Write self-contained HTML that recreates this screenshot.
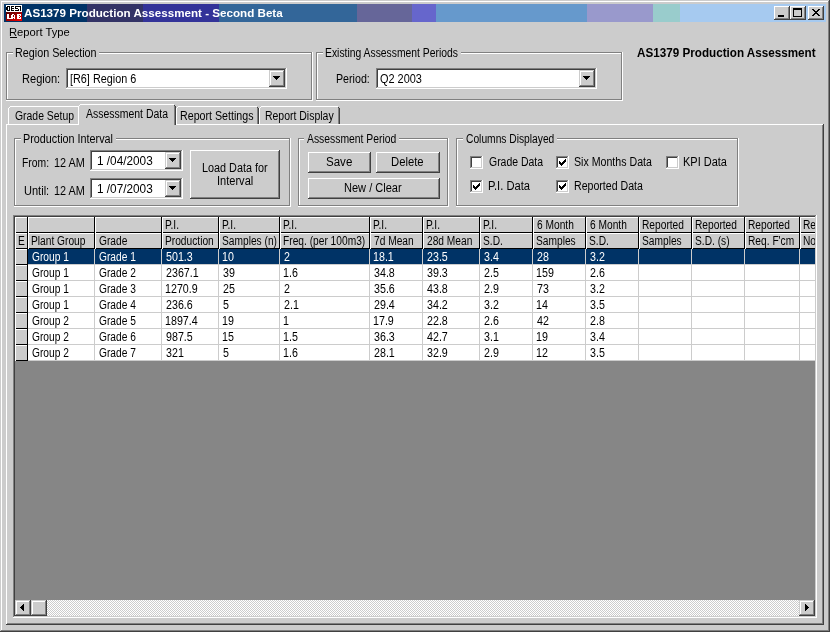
<!DOCTYPE html>
<html><head><meta charset="utf-8"><style>
html,body{margin:0;padding:0;width:830px;height:632px;overflow:hidden;background:#cccccc}
div{position:absolute;box-sizing:border-box}
.t{white-space:pre;transform-origin:0 0}
#tx{left:0;top:0;width:830px;height:632px;will-change:transform}
</style></head><body>
<div style="left:0px;top:0px;width:830px;height:632px;background:#cccccc;"></div><div style="left:0px;top:0px;width:829px;height:1px;background:#cccccc;"></div><div style="left:0px;top:0px;width:1px;height:631px;background:#cccccc;"></div><div style="left:1px;top:1px;width:827px;height:1px;background:#ffffff;"></div><div style="left:1px;top:1px;width:1px;height:629px;background:#ffffff;"></div><div style="left:0px;top:631px;width:830px;height:1px;background:#404040;"></div><div style="left:829px;top:0px;width:1px;height:632px;background:#404040;"></div><div style="left:1px;top:630px;width:828px;height:1px;background:#808080;"></div><div style="left:828px;top:1px;width:1px;height:630px;background:#808080;"></div><div style="left:4px;top:4px;width:83px;height:18px;background:#003366;"></div><div style="left:87px;top:4px;width:56px;height:18px;background:#333366;"></div><div style="left:143px;top:4px;width:76px;height:18px;background:#333399;"></div><div style="left:219px;top:4px;width:138px;height:18px;background:#336699;"></div><div style="left:357px;top:4px;width:55px;height:18px;background:#666699;"></div><div style="left:412px;top:4px;width:24px;height:18px;background:#6666cc;"></div><div style="left:436px;top:4px;width:151px;height:18px;background:#6699cc;"></div><div style="left:587px;top:4px;width:66px;height:18px;background:#9999cc;"></div><div style="left:653px;top:4px;width:27px;height:18px;background:#99cccc;"></div><div style="left:680px;top:4px;width:146px;height:18px;background:#a6caf0;"></div><svg style="position:absolute;left:6px;top:5px" width="16" height="16" viewBox="0 0 16 16" shape-rendering="crispEdges"><defs><linearGradient id="rg" x1="0" y1="0" x2="1" y2="1"><stop offset="0" stop-color="#500000"/><stop offset="0.5" stop-color="#a00000"/><stop offset="1" stop-color="#ff0000"/></linearGradient></defs><rect x="0" y="0" width="16" height="7" fill="#fff"/><rect x="0" y="7" width="16" height="9" fill="url(#rg)"/><path fill="#000" d="M1 1h3v1h-3zM5 1h3v1h-3zM9 1h6v1h-6zM0 2h2v1h-2zM3 2h1v1h-1zM5 2h1v1h-1zM9 2h1v1h-1zM14 2h1v1h-1zM0 3h2v1h-2zM3 3h1v1h-1zM5 3h3v1h-3zM9 3h3v1h-3zM14 3h1v1h-1zM0 4h2v1h-2zM3 4h1v1h-1zM5 4h1v1h-1zM12 4h1v1h-1zM14 4h1v1h-1zM1 5h3v1h-3zM5 5h3v1h-3zM9 5h4v1h-4zM14 5h1v1h-1z"/><path fill="#fff" d="M1 9h2v1h-2zM6 9h2v1h-2zM11 9h4v1h-4zM1 10h2v1h-2zM5 10h2v1h-2zM8 10h1v1h-1zM11 10h2v1h-2zM14 10h1v1h-1zM1 11h2v1h-2zM5 11h2v1h-2zM8 11h1v1h-1zM11 11h3v1h-3zM1 12h2v1h-2zM5 12h4v1h-4zM11 12h2v1h-2zM14 12h1v1h-1zM1 13h6v1h-6zM8 13h1v1h-1zM11 13h4v1h-4z"/></svg><div style="left:774px;top:6px;width:16px;height:14px;background:#cccccc;"></div><div style="left:774px;top:6px;width:15px;height:1px;background:#ffffff;"></div><div style="left:774px;top:6px;width:1px;height:13px;background:#ffffff;"></div><div style="left:774px;top:19px;width:16px;height:1px;background:#404040;"></div><div style="left:789px;top:6px;width:1px;height:14px;background:#404040;"></div><div style="left:775px;top:18px;width:14px;height:1px;background:#808080;"></div><div style="left:788px;top:7px;width:1px;height:12px;background:#808080;"></div><div style="left:790px;top:6px;width:16px;height:14px;background:#cccccc;"></div><div style="left:790px;top:6px;width:15px;height:1px;background:#ffffff;"></div><div style="left:790px;top:6px;width:1px;height:13px;background:#ffffff;"></div><div style="left:790px;top:19px;width:16px;height:1px;background:#404040;"></div><div style="left:805px;top:6px;width:1px;height:14px;background:#404040;"></div><div style="left:791px;top:18px;width:14px;height:1px;background:#808080;"></div><div style="left:804px;top:7px;width:1px;height:12px;background:#808080;"></div><div style="left:808px;top:6px;width:16px;height:14px;background:#cccccc;"></div><div style="left:808px;top:6px;width:15px;height:1px;background:#ffffff;"></div><div style="left:808px;top:6px;width:1px;height:13px;background:#ffffff;"></div><div style="left:808px;top:19px;width:16px;height:1px;background:#404040;"></div><div style="left:823px;top:6px;width:1px;height:14px;background:#404040;"></div><div style="left:809px;top:18px;width:14px;height:1px;background:#808080;"></div><div style="left:822px;top:7px;width:1px;height:12px;background:#808080;"></div><div style="left:778px;top:15px;width:6px;height:2px;background:#000000;"></div><div style="left:793px;top:8px;width:9px;height:9px;background:#000000;"></div><div style="left:794px;top:10px;width:7px;height:6px;background:#cccccc;"></div><svg style="position:absolute;left:812px;top:9px" width="8" height="7" viewBox="0 0 8 7" shape-rendering="crispEdges"><path fill="#000" d="M0 0h2v1h-2zM6 0h2v1h-2zM1 1h2v1h-2zM5 1h2v1h-2zM2 2h4v1h-4zM3 3h2v1h-2zM2 4h4v1h-4zM1 5h2v1h-2zM5 5h2v1h-2zM0 6h2v1h-2zM6 6h2v1h-2z"/></svg><div style="left:10px;top:37px;width:7px;height:1px;background:#000000;"></div><div style="left:7px;top:53px;width:304px;height:1px;background:#ffffff;"></div><div style="left:7px;top:53px;width:1px;height:46px;background:#ffffff;"></div><div style="left:6px;top:100px;width:307px;height:1px;background:#ffffff;"></div><div style="left:312px;top:52px;width:1px;height:49px;background:#ffffff;"></div><div style="left:6px;top:52px;width:306px;height:1px;background:#808080;"></div><div style="left:6px;top:52px;width:1px;height:48px;background:#808080;"></div><div style="left:7px;top:99px;width:305px;height:1px;background:#808080;"></div><div style="left:311px;top:53px;width:1px;height:47px;background:#808080;"></div><div style="left:13px;top:48px;width:86px;height:9px;background:#cccccc;"></div><div style="left:66px;top:68px;width:221px;height:21px;background:#ffffff;"></div><div style="left:66px;top:68px;width:220px;height:1px;background:#808080;"></div><div style="left:66px;top:68px;width:1px;height:20px;background:#808080;"></div><div style="left:67px;top:69px;width:218px;height:1px;background:#404040;"></div><div style="left:67px;top:69px;width:1px;height:18px;background:#404040;"></div><div style="left:66px;top:88px;width:221px;height:1px;background:#ffffff;"></div><div style="left:286px;top:68px;width:1px;height:21px;background:#ffffff;"></div><div style="left:67px;top:87px;width:219px;height:1px;background:#cccccc;"></div><div style="left:285px;top:69px;width:1px;height:19px;background:#cccccc;"></div><div style="left:269px;top:70px;width:16px;height:17px;background:#cccccc;"></div><div style="left:269px;top:70px;width:15px;height:1px;background:#cccccc;"></div><div style="left:269px;top:70px;width:1px;height:16px;background:#cccccc;"></div><div style="left:270px;top:71px;width:13px;height:1px;background:#ffffff;"></div><div style="left:270px;top:71px;width:1px;height:14px;background:#ffffff;"></div><div style="left:269px;top:86px;width:16px;height:1px;background:#404040;"></div><div style="left:284px;top:70px;width:1px;height:17px;background:#404040;"></div><div style="left:270px;top:85px;width:14px;height:1px;background:#808080;"></div><div style="left:283px;top:71px;width:1px;height:15px;background:#808080;"></div><div style="left:273px;top:76px;width:7px;height:1px;background:#000000;"></div><div style="left:274px;top:77px;width:5px;height:1px;background:#000000;"></div><div style="left:275px;top:78px;width:3px;height:1px;background:#000000;"></div><div style="left:276px;top:79px;width:1px;height:1px;background:#000000;"></div><div style="left:317px;top:53px;width:304px;height:1px;background:#ffffff;"></div><div style="left:317px;top:53px;width:1px;height:46px;background:#ffffff;"></div><div style="left:316px;top:100px;width:307px;height:1px;background:#ffffff;"></div><div style="left:622px;top:52px;width:1px;height:49px;background:#ffffff;"></div><div style="left:316px;top:52px;width:306px;height:1px;background:#808080;"></div><div style="left:316px;top:52px;width:1px;height:48px;background:#808080;"></div><div style="left:317px;top:99px;width:305px;height:1px;background:#808080;"></div><div style="left:621px;top:53px;width:1px;height:47px;background:#808080;"></div><div style="left:323px;top:48px;width:138px;height:9px;background:#cccccc;"></div><div style="left:376px;top:68px;width:221px;height:21px;background:#ffffff;"></div><div style="left:376px;top:68px;width:220px;height:1px;background:#808080;"></div><div style="left:376px;top:68px;width:1px;height:20px;background:#808080;"></div><div style="left:377px;top:69px;width:218px;height:1px;background:#404040;"></div><div style="left:377px;top:69px;width:1px;height:18px;background:#404040;"></div><div style="left:376px;top:88px;width:221px;height:1px;background:#ffffff;"></div><div style="left:596px;top:68px;width:1px;height:21px;background:#ffffff;"></div><div style="left:377px;top:87px;width:219px;height:1px;background:#cccccc;"></div><div style="left:595px;top:69px;width:1px;height:19px;background:#cccccc;"></div><div style="left:579px;top:70px;width:16px;height:17px;background:#cccccc;"></div><div style="left:579px;top:70px;width:15px;height:1px;background:#cccccc;"></div><div style="left:579px;top:70px;width:1px;height:16px;background:#cccccc;"></div><div style="left:580px;top:71px;width:13px;height:1px;background:#ffffff;"></div><div style="left:580px;top:71px;width:1px;height:14px;background:#ffffff;"></div><div style="left:579px;top:86px;width:16px;height:1px;background:#404040;"></div><div style="left:594px;top:70px;width:1px;height:17px;background:#404040;"></div><div style="left:580px;top:85px;width:14px;height:1px;background:#808080;"></div><div style="left:593px;top:71px;width:1px;height:15px;background:#808080;"></div><div style="left:583px;top:76px;width:7px;height:1px;background:#000000;"></div><div style="left:584px;top:77px;width:5px;height:1px;background:#000000;"></div><div style="left:585px;top:78px;width:3px;height:1px;background:#000000;"></div><div style="left:586px;top:79px;width:1px;height:1px;background:#000000;"></div><div style="left:6px;top:124px;width:817px;height:1px;background:#ffffff;"></div><div style="left:6px;top:124px;width:1px;height:500px;background:#ffffff;"></div><div style="left:822px;top:125px;width:1px;height:499px;background:#808080;"></div><div style="left:823px;top:124px;width:1px;height:501px;background:#404040;"></div><div style="left:7px;top:623px;width:816px;height:1px;background:#808080;"></div><div style="left:6px;top:624px;width:818px;height:1px;background:#404040;"></div><div style="left:8px;top:106px;width:73px;height:18px;background:#cccccc;"></div><div style="left:8px;top:108px;width:1px;height:16px;background:#ffffff;"></div><div style="left:9px;top:107px;width:1px;height:1px;background:#ffffff;"></div><div style="left:10px;top:106px;width:69px;height:1px;background:#ffffff;"></div><div style="left:79px;top:107px;width:1px;height:17px;background:#808080;"></div><div style="left:80px;top:108px;width:1px;height:16px;background:#404040;"></div><div style="left:79px;top:107px;width:1px;height:1px;background:#404040;"></div><div style="left:176px;top:106px;width:83px;height:18px;background:#cccccc;"></div><div style="left:176px;top:108px;width:1px;height:16px;background:#ffffff;"></div><div style="left:177px;top:107px;width:1px;height:1px;background:#ffffff;"></div><div style="left:178px;top:106px;width:79px;height:1px;background:#ffffff;"></div><div style="left:257px;top:107px;width:1px;height:17px;background:#808080;"></div><div style="left:258px;top:108px;width:1px;height:16px;background:#404040;"></div><div style="left:257px;top:107px;width:1px;height:1px;background:#404040;"></div><div style="left:259px;top:106px;width:81px;height:18px;background:#cccccc;"></div><div style="left:259px;top:108px;width:1px;height:16px;background:#ffffff;"></div><div style="left:260px;top:107px;width:1px;height:1px;background:#ffffff;"></div><div style="left:261px;top:106px;width:77px;height:1px;background:#ffffff;"></div><div style="left:338px;top:107px;width:1px;height:17px;background:#808080;"></div><div style="left:339px;top:108px;width:1px;height:16px;background:#404040;"></div><div style="left:338px;top:107px;width:1px;height:1px;background:#404040;"></div><div style="left:78px;top:104px;width:98px;height:21px;background:#cccccc;"></div><div style="left:78px;top:106px;width:1px;height:19px;background:#ffffff;"></div><div style="left:79px;top:105px;width:1px;height:1px;background:#ffffff;"></div><div style="left:80px;top:104px;width:94px;height:1px;background:#ffffff;"></div><div style="left:174px;top:105px;width:1px;height:20px;background:#808080;"></div><div style="left:175px;top:106px;width:1px;height:19px;background:#404040;"></div><div style="left:174px;top:105px;width:1px;height:1px;background:#404040;"></div><div style="left:15px;top:139px;width:274px;height:1px;background:#ffffff;"></div><div style="left:15px;top:139px;width:1px;height:66px;background:#ffffff;"></div><div style="left:14px;top:206px;width:277px;height:1px;background:#ffffff;"></div><div style="left:290px;top:138px;width:1px;height:69px;background:#ffffff;"></div><div style="left:14px;top:138px;width:276px;height:1px;background:#808080;"></div><div style="left:14px;top:138px;width:1px;height:68px;background:#808080;"></div><div style="left:15px;top:205px;width:275px;height:1px;background:#808080;"></div><div style="left:289px;top:139px;width:1px;height:67px;background:#808080;"></div><div style="left:21px;top:134px;width:95px;height:9px;background:#cccccc;"></div><div style="left:90px;top:150px;width:93px;height:21px;background:#ffffff;"></div><div style="left:90px;top:150px;width:92px;height:1px;background:#808080;"></div><div style="left:90px;top:150px;width:1px;height:20px;background:#808080;"></div><div style="left:91px;top:151px;width:90px;height:1px;background:#404040;"></div><div style="left:91px;top:151px;width:1px;height:18px;background:#404040;"></div><div style="left:90px;top:170px;width:93px;height:1px;background:#ffffff;"></div><div style="left:182px;top:150px;width:1px;height:21px;background:#ffffff;"></div><div style="left:91px;top:169px;width:91px;height:1px;background:#cccccc;"></div><div style="left:181px;top:151px;width:1px;height:19px;background:#cccccc;"></div><div style="left:165px;top:152px;width:16px;height:17px;background:#cccccc;"></div><div style="left:165px;top:152px;width:15px;height:1px;background:#cccccc;"></div><div style="left:165px;top:152px;width:1px;height:16px;background:#cccccc;"></div><div style="left:166px;top:153px;width:13px;height:1px;background:#ffffff;"></div><div style="left:166px;top:153px;width:1px;height:14px;background:#ffffff;"></div><div style="left:165px;top:168px;width:16px;height:1px;background:#404040;"></div><div style="left:180px;top:152px;width:1px;height:17px;background:#404040;"></div><div style="left:166px;top:167px;width:14px;height:1px;background:#808080;"></div><div style="left:179px;top:153px;width:1px;height:15px;background:#808080;"></div><div style="left:169px;top:158px;width:7px;height:1px;background:#000000;"></div><div style="left:170px;top:159px;width:5px;height:1px;background:#000000;"></div><div style="left:171px;top:160px;width:3px;height:1px;background:#000000;"></div><div style="left:172px;top:161px;width:1px;height:1px;background:#000000;"></div><div style="left:90px;top:178px;width:93px;height:21px;background:#ffffff;"></div><div style="left:90px;top:178px;width:92px;height:1px;background:#808080;"></div><div style="left:90px;top:178px;width:1px;height:20px;background:#808080;"></div><div style="left:91px;top:179px;width:90px;height:1px;background:#404040;"></div><div style="left:91px;top:179px;width:1px;height:18px;background:#404040;"></div><div style="left:90px;top:198px;width:93px;height:1px;background:#ffffff;"></div><div style="left:182px;top:178px;width:1px;height:21px;background:#ffffff;"></div><div style="left:91px;top:197px;width:91px;height:1px;background:#cccccc;"></div><div style="left:181px;top:179px;width:1px;height:19px;background:#cccccc;"></div><div style="left:165px;top:180px;width:16px;height:17px;background:#cccccc;"></div><div style="left:165px;top:180px;width:15px;height:1px;background:#cccccc;"></div><div style="left:165px;top:180px;width:1px;height:16px;background:#cccccc;"></div><div style="left:166px;top:181px;width:13px;height:1px;background:#ffffff;"></div><div style="left:166px;top:181px;width:1px;height:14px;background:#ffffff;"></div><div style="left:165px;top:196px;width:16px;height:1px;background:#404040;"></div><div style="left:180px;top:180px;width:1px;height:17px;background:#404040;"></div><div style="left:166px;top:195px;width:14px;height:1px;background:#808080;"></div><div style="left:179px;top:181px;width:1px;height:15px;background:#808080;"></div><div style="left:169px;top:186px;width:7px;height:1px;background:#000000;"></div><div style="left:170px;top:187px;width:5px;height:1px;background:#000000;"></div><div style="left:171px;top:188px;width:3px;height:1px;background:#000000;"></div><div style="left:172px;top:189px;width:1px;height:1px;background:#000000;"></div><div style="left:190px;top:150px;width:90px;height:49px;background:#cccccc;"></div><div style="left:190px;top:150px;width:89px;height:1px;background:#ffffff;"></div><div style="left:190px;top:150px;width:1px;height:48px;background:#ffffff;"></div><div style="left:190px;top:198px;width:90px;height:1px;background:#404040;"></div><div style="left:279px;top:150px;width:1px;height:49px;background:#404040;"></div><div style="left:191px;top:197px;width:88px;height:1px;background:#808080;"></div><div style="left:278px;top:151px;width:1px;height:47px;background:#808080;"></div><div style="left:299px;top:139px;width:148px;height:1px;background:#ffffff;"></div><div style="left:299px;top:139px;width:1px;height:66px;background:#ffffff;"></div><div style="left:298px;top:206px;width:151px;height:1px;background:#ffffff;"></div><div style="left:448px;top:138px;width:1px;height:69px;background:#ffffff;"></div><div style="left:298px;top:138px;width:150px;height:1px;background:#808080;"></div><div style="left:298px;top:138px;width:1px;height:68px;background:#808080;"></div><div style="left:299px;top:205px;width:149px;height:1px;background:#808080;"></div><div style="left:447px;top:139px;width:1px;height:67px;background:#808080;"></div><div style="left:304px;top:134px;width:95px;height:9px;background:#cccccc;"></div><div style="left:308px;top:152px;width:63px;height:21px;background:#cccccc;"></div><div style="left:308px;top:152px;width:62px;height:1px;background:#ffffff;"></div><div style="left:308px;top:152px;width:1px;height:20px;background:#ffffff;"></div><div style="left:308px;top:172px;width:63px;height:1px;background:#404040;"></div><div style="left:370px;top:152px;width:1px;height:21px;background:#404040;"></div><div style="left:309px;top:171px;width:61px;height:1px;background:#808080;"></div><div style="left:369px;top:153px;width:1px;height:19px;background:#808080;"></div><div style="left:376px;top:152px;width:64px;height:21px;background:#cccccc;"></div><div style="left:376px;top:152px;width:63px;height:1px;background:#ffffff;"></div><div style="left:376px;top:152px;width:1px;height:20px;background:#ffffff;"></div><div style="left:376px;top:172px;width:64px;height:1px;background:#404040;"></div><div style="left:439px;top:152px;width:1px;height:21px;background:#404040;"></div><div style="left:377px;top:171px;width:62px;height:1px;background:#808080;"></div><div style="left:438px;top:153px;width:1px;height:19px;background:#808080;"></div><div style="left:308px;top:178px;width:132px;height:21px;background:#cccccc;"></div><div style="left:308px;top:178px;width:131px;height:1px;background:#ffffff;"></div><div style="left:308px;top:178px;width:1px;height:20px;background:#ffffff;"></div><div style="left:308px;top:198px;width:132px;height:1px;background:#404040;"></div><div style="left:439px;top:178px;width:1px;height:21px;background:#404040;"></div><div style="left:309px;top:197px;width:130px;height:1px;background:#808080;"></div><div style="left:438px;top:179px;width:1px;height:19px;background:#808080;"></div><div style="left:457px;top:139px;width:280px;height:1px;background:#ffffff;"></div><div style="left:457px;top:139px;width:1px;height:66px;background:#ffffff;"></div><div style="left:456px;top:206px;width:283px;height:1px;background:#ffffff;"></div><div style="left:738px;top:138px;width:1px;height:69px;background:#ffffff;"></div><div style="left:456px;top:138px;width:282px;height:1px;background:#808080;"></div><div style="left:456px;top:138px;width:1px;height:68px;background:#808080;"></div><div style="left:457px;top:205px;width:281px;height:1px;background:#808080;"></div><div style="left:737px;top:139px;width:1px;height:67px;background:#808080;"></div><div style="left:463px;top:134px;width:94px;height:9px;background:#cccccc;"></div><div style="left:470px;top:156px;width:13px;height:13px;background:#ffffff;"></div><div style="left:470px;top:156px;width:12px;height:1px;background:#808080;"></div><div style="left:470px;top:156px;width:1px;height:12px;background:#808080;"></div><div style="left:471px;top:157px;width:10px;height:1px;background:#404040;"></div><div style="left:471px;top:157px;width:1px;height:10px;background:#404040;"></div><div style="left:470px;top:168px;width:13px;height:1px;background:#ffffff;"></div><div style="left:482px;top:156px;width:1px;height:13px;background:#ffffff;"></div><div style="left:471px;top:167px;width:11px;height:1px;background:#cccccc;"></div><div style="left:481px;top:157px;width:1px;height:11px;background:#cccccc;"></div><div style="left:556px;top:156px;width:13px;height:13px;background:#ffffff;"></div><div style="left:556px;top:156px;width:12px;height:1px;background:#808080;"></div><div style="left:556px;top:156px;width:1px;height:12px;background:#808080;"></div><div style="left:557px;top:157px;width:10px;height:1px;background:#404040;"></div><div style="left:557px;top:157px;width:1px;height:10px;background:#404040;"></div><div style="left:556px;top:168px;width:13px;height:1px;background:#ffffff;"></div><div style="left:568px;top:156px;width:1px;height:13px;background:#ffffff;"></div><div style="left:557px;top:167px;width:11px;height:1px;background:#cccccc;"></div><div style="left:567px;top:157px;width:1px;height:11px;background:#cccccc;"></div><div style="left:565px;top:159px;width:1px;height:1px;background:#000000;"></div><div style="left:564px;top:160px;width:1px;height:1px;background:#000000;"></div><div style="left:565px;top:160px;width:1px;height:1px;background:#000000;"></div><div style="left:559px;top:161px;width:1px;height:1px;background:#000000;"></div><div style="left:563px;top:161px;width:1px;height:1px;background:#000000;"></div><div style="left:564px;top:161px;width:1px;height:1px;background:#000000;"></div><div style="left:565px;top:161px;width:1px;height:1px;background:#000000;"></div><div style="left:559px;top:162px;width:1px;height:1px;background:#000000;"></div><div style="left:560px;top:162px;width:1px;height:1px;background:#000000;"></div><div style="left:562px;top:162px;width:1px;height:1px;background:#000000;"></div><div style="left:563px;top:162px;width:1px;height:1px;background:#000000;"></div><div style="left:564px;top:162px;width:1px;height:1px;background:#000000;"></div><div style="left:559px;top:163px;width:1px;height:1px;background:#000000;"></div><div style="left:560px;top:163px;width:1px;height:1px;background:#000000;"></div><div style="left:561px;top:163px;width:1px;height:1px;background:#000000;"></div><div style="left:562px;top:163px;width:1px;height:1px;background:#000000;"></div><div style="left:563px;top:163px;width:1px;height:1px;background:#000000;"></div><div style="left:560px;top:164px;width:1px;height:1px;background:#000000;"></div><div style="left:561px;top:164px;width:1px;height:1px;background:#000000;"></div><div style="left:562px;top:164px;width:1px;height:1px;background:#000000;"></div><div style="left:561px;top:165px;width:1px;height:1px;background:#000000;"></div><div style="left:666px;top:156px;width:13px;height:13px;background:#ffffff;"></div><div style="left:666px;top:156px;width:12px;height:1px;background:#808080;"></div><div style="left:666px;top:156px;width:1px;height:12px;background:#808080;"></div><div style="left:667px;top:157px;width:10px;height:1px;background:#404040;"></div><div style="left:667px;top:157px;width:1px;height:10px;background:#404040;"></div><div style="left:666px;top:168px;width:13px;height:1px;background:#ffffff;"></div><div style="left:678px;top:156px;width:1px;height:13px;background:#ffffff;"></div><div style="left:667px;top:167px;width:11px;height:1px;background:#cccccc;"></div><div style="left:677px;top:157px;width:1px;height:11px;background:#cccccc;"></div><div style="left:470px;top:180px;width:13px;height:13px;background:#ffffff;"></div><div style="left:470px;top:180px;width:12px;height:1px;background:#808080;"></div><div style="left:470px;top:180px;width:1px;height:12px;background:#808080;"></div><div style="left:471px;top:181px;width:10px;height:1px;background:#404040;"></div><div style="left:471px;top:181px;width:1px;height:10px;background:#404040;"></div><div style="left:470px;top:192px;width:13px;height:1px;background:#ffffff;"></div><div style="left:482px;top:180px;width:1px;height:13px;background:#ffffff;"></div><div style="left:471px;top:191px;width:11px;height:1px;background:#cccccc;"></div><div style="left:481px;top:181px;width:1px;height:11px;background:#cccccc;"></div><div style="left:479px;top:183px;width:1px;height:1px;background:#000000;"></div><div style="left:478px;top:184px;width:1px;height:1px;background:#000000;"></div><div style="left:479px;top:184px;width:1px;height:1px;background:#000000;"></div><div style="left:473px;top:185px;width:1px;height:1px;background:#000000;"></div><div style="left:477px;top:185px;width:1px;height:1px;background:#000000;"></div><div style="left:478px;top:185px;width:1px;height:1px;background:#000000;"></div><div style="left:479px;top:185px;width:1px;height:1px;background:#000000;"></div><div style="left:473px;top:186px;width:1px;height:1px;background:#000000;"></div><div style="left:474px;top:186px;width:1px;height:1px;background:#000000;"></div><div style="left:476px;top:186px;width:1px;height:1px;background:#000000;"></div><div style="left:477px;top:186px;width:1px;height:1px;background:#000000;"></div><div style="left:478px;top:186px;width:1px;height:1px;background:#000000;"></div><div style="left:473px;top:187px;width:1px;height:1px;background:#000000;"></div><div style="left:474px;top:187px;width:1px;height:1px;background:#000000;"></div><div style="left:475px;top:187px;width:1px;height:1px;background:#000000;"></div><div style="left:476px;top:187px;width:1px;height:1px;background:#000000;"></div><div style="left:477px;top:187px;width:1px;height:1px;background:#000000;"></div><div style="left:474px;top:188px;width:1px;height:1px;background:#000000;"></div><div style="left:475px;top:188px;width:1px;height:1px;background:#000000;"></div><div style="left:476px;top:188px;width:1px;height:1px;background:#000000;"></div><div style="left:475px;top:189px;width:1px;height:1px;background:#000000;"></div><div style="left:556px;top:180px;width:13px;height:13px;background:#ffffff;"></div><div style="left:556px;top:180px;width:12px;height:1px;background:#808080;"></div><div style="left:556px;top:180px;width:1px;height:12px;background:#808080;"></div><div style="left:557px;top:181px;width:10px;height:1px;background:#404040;"></div><div style="left:557px;top:181px;width:1px;height:10px;background:#404040;"></div><div style="left:556px;top:192px;width:13px;height:1px;background:#ffffff;"></div><div style="left:568px;top:180px;width:1px;height:13px;background:#ffffff;"></div><div style="left:557px;top:191px;width:11px;height:1px;background:#cccccc;"></div><div style="left:567px;top:181px;width:1px;height:11px;background:#cccccc;"></div><div style="left:565px;top:183px;width:1px;height:1px;background:#000000;"></div><div style="left:564px;top:184px;width:1px;height:1px;background:#000000;"></div><div style="left:565px;top:184px;width:1px;height:1px;background:#000000;"></div><div style="left:559px;top:185px;width:1px;height:1px;background:#000000;"></div><div style="left:563px;top:185px;width:1px;height:1px;background:#000000;"></div><div style="left:564px;top:185px;width:1px;height:1px;background:#000000;"></div><div style="left:565px;top:185px;width:1px;height:1px;background:#000000;"></div><div style="left:559px;top:186px;width:1px;height:1px;background:#000000;"></div><div style="left:560px;top:186px;width:1px;height:1px;background:#000000;"></div><div style="left:562px;top:186px;width:1px;height:1px;background:#000000;"></div><div style="left:563px;top:186px;width:1px;height:1px;background:#000000;"></div><div style="left:564px;top:186px;width:1px;height:1px;background:#000000;"></div><div style="left:559px;top:187px;width:1px;height:1px;background:#000000;"></div><div style="left:560px;top:187px;width:1px;height:1px;background:#000000;"></div><div style="left:561px;top:187px;width:1px;height:1px;background:#000000;"></div><div style="left:562px;top:187px;width:1px;height:1px;background:#000000;"></div><div style="left:563px;top:187px;width:1px;height:1px;background:#000000;"></div><div style="left:560px;top:188px;width:1px;height:1px;background:#000000;"></div><div style="left:561px;top:188px;width:1px;height:1px;background:#000000;"></div><div style="left:562px;top:188px;width:1px;height:1px;background:#000000;"></div><div style="left:561px;top:189px;width:1px;height:1px;background:#000000;"></div><div style="left:13px;top:215px;width:803px;height:1px;background:#808080;"></div><div style="left:13px;top:215px;width:1px;height:402px;background:#808080;"></div><div style="left:14px;top:216px;width:801px;height:1px;background:#404040;"></div><div style="left:14px;top:216px;width:1px;height:401px;background:#404040;"></div><div style="left:815px;top:216px;width:1px;height:401px;background:#cccccc;"></div><div style="left:14px;top:616px;width:802px;height:1px;background:#cccccc;"></div><div style="left:13px;top:617px;width:804px;height:1px;background:#ffffff;"></div><div style="left:816px;top:215px;width:1px;height:403px;background:#ffffff;"></div><div style="left:15px;top:217px;width:800px;height:399px;background:#868686;"></div><div style="left:15px;top:217px;width:800px;height:383px;overflow:hidden"><div style="left:0px;top:0px;width:13px;height:16px;background:#cccccc"></div><div style="left:0px;top:0px;width:12px;height:1px;background:#ffffff"></div><div style="left:0px;top:0px;width:1px;height:16px;background:#ffffff"></div><div style="left:1px;top:15px;width:12px;height:1px;background:#000000"></div><div style="left:12px;top:0px;width:1px;height:16px;background:#000000"></div><div style="left:0px;top:16px;width:13px;height:16px;background:#cccccc"></div><div style="left:0px;top:16px;width:12px;height:1px;background:#ffffff"></div><div style="left:0px;top:16px;width:1px;height:16px;background:#ffffff"></div><div style="left:1px;top:31px;width:12px;height:1px;background:#000000"></div><div style="left:12px;top:16px;width:1px;height:16px;background:#000000"></div><div style="left:13px;top:0px;width:67px;height:16px;background:#cccccc"></div><div style="left:13px;top:0px;width:66px;height:1px;background:#ffffff"></div><div style="left:13px;top:0px;width:1px;height:16px;background:#ffffff"></div><div style="left:14px;top:15px;width:66px;height:1px;background:#000000"></div><div style="left:79px;top:0px;width:1px;height:16px;background:#000000"></div><div style="left:13px;top:16px;width:67px;height:16px;background:#cccccc"></div><div style="left:13px;top:16px;width:66px;height:1px;background:#ffffff"></div><div style="left:13px;top:16px;width:1px;height:16px;background:#ffffff"></div><div style="left:14px;top:31px;width:66px;height:1px;background:#000000"></div><div style="left:79px;top:16px;width:1px;height:16px;background:#000000"></div><div style="left:80px;top:0px;width:67px;height:16px;background:#cccccc"></div><div style="left:80px;top:0px;width:66px;height:1px;background:#ffffff"></div><div style="left:80px;top:0px;width:1px;height:16px;background:#ffffff"></div><div style="left:81px;top:15px;width:66px;height:1px;background:#000000"></div><div style="left:146px;top:0px;width:1px;height:16px;background:#000000"></div><div style="left:80px;top:16px;width:67px;height:16px;background:#cccccc"></div><div style="left:80px;top:16px;width:66px;height:1px;background:#ffffff"></div><div style="left:80px;top:16px;width:1px;height:16px;background:#ffffff"></div><div style="left:81px;top:31px;width:66px;height:1px;background:#000000"></div><div style="left:146px;top:16px;width:1px;height:16px;background:#000000"></div><div style="left:147px;top:0px;width:57px;height:16px;background:#cccccc"></div><div style="left:147px;top:0px;width:56px;height:1px;background:#ffffff"></div><div style="left:147px;top:0px;width:1px;height:16px;background:#ffffff"></div><div style="left:148px;top:15px;width:56px;height:1px;background:#000000"></div><div style="left:203px;top:0px;width:1px;height:16px;background:#000000"></div><div style="left:147px;top:16px;width:57px;height:16px;background:#cccccc"></div><div style="left:147px;top:16px;width:56px;height:1px;background:#ffffff"></div><div style="left:147px;top:16px;width:1px;height:16px;background:#ffffff"></div><div style="left:148px;top:31px;width:56px;height:1px;background:#000000"></div><div style="left:203px;top:16px;width:1px;height:16px;background:#000000"></div><div style="left:204px;top:0px;width:61px;height:16px;background:#cccccc"></div><div style="left:204px;top:0px;width:60px;height:1px;background:#ffffff"></div><div style="left:204px;top:0px;width:1px;height:16px;background:#ffffff"></div><div style="left:205px;top:15px;width:60px;height:1px;background:#000000"></div><div style="left:264px;top:0px;width:1px;height:16px;background:#000000"></div><div style="left:204px;top:16px;width:61px;height:16px;background:#cccccc"></div><div style="left:204px;top:16px;width:60px;height:1px;background:#ffffff"></div><div style="left:204px;top:16px;width:1px;height:16px;background:#ffffff"></div><div style="left:205px;top:31px;width:60px;height:1px;background:#000000"></div><div style="left:264px;top:16px;width:1px;height:16px;background:#000000"></div><div style="left:265px;top:0px;width:90px;height:16px;background:#cccccc"></div><div style="left:265px;top:0px;width:89px;height:1px;background:#ffffff"></div><div style="left:265px;top:0px;width:1px;height:16px;background:#ffffff"></div><div style="left:266px;top:15px;width:89px;height:1px;background:#000000"></div><div style="left:354px;top:0px;width:1px;height:16px;background:#000000"></div><div style="left:265px;top:16px;width:90px;height:16px;background:#cccccc"></div><div style="left:265px;top:16px;width:89px;height:1px;background:#ffffff"></div><div style="left:265px;top:16px;width:1px;height:16px;background:#ffffff"></div><div style="left:266px;top:31px;width:89px;height:1px;background:#000000"></div><div style="left:354px;top:16px;width:1px;height:16px;background:#000000"></div><div style="left:355px;top:0px;width:53px;height:16px;background:#cccccc"></div><div style="left:355px;top:0px;width:52px;height:1px;background:#ffffff"></div><div style="left:355px;top:0px;width:1px;height:16px;background:#ffffff"></div><div style="left:356px;top:15px;width:52px;height:1px;background:#000000"></div><div style="left:407px;top:0px;width:1px;height:16px;background:#000000"></div><div style="left:355px;top:16px;width:53px;height:16px;background:#cccccc"></div><div style="left:355px;top:16px;width:52px;height:1px;background:#ffffff"></div><div style="left:355px;top:16px;width:1px;height:16px;background:#ffffff"></div><div style="left:356px;top:31px;width:52px;height:1px;background:#000000"></div><div style="left:407px;top:16px;width:1px;height:16px;background:#000000"></div><div style="left:408px;top:0px;width:57px;height:16px;background:#cccccc"></div><div style="left:408px;top:0px;width:56px;height:1px;background:#ffffff"></div><div style="left:408px;top:0px;width:1px;height:16px;background:#ffffff"></div><div style="left:409px;top:15px;width:56px;height:1px;background:#000000"></div><div style="left:464px;top:0px;width:1px;height:16px;background:#000000"></div><div style="left:408px;top:16px;width:57px;height:16px;background:#cccccc"></div><div style="left:408px;top:16px;width:56px;height:1px;background:#ffffff"></div><div style="left:408px;top:16px;width:1px;height:16px;background:#ffffff"></div><div style="left:409px;top:31px;width:56px;height:1px;background:#000000"></div><div style="left:464px;top:16px;width:1px;height:16px;background:#000000"></div><div style="left:465px;top:0px;width:53px;height:16px;background:#cccccc"></div><div style="left:465px;top:0px;width:52px;height:1px;background:#ffffff"></div><div style="left:465px;top:0px;width:1px;height:16px;background:#ffffff"></div><div style="left:466px;top:15px;width:52px;height:1px;background:#000000"></div><div style="left:517px;top:0px;width:1px;height:16px;background:#000000"></div><div style="left:465px;top:16px;width:53px;height:16px;background:#cccccc"></div><div style="left:465px;top:16px;width:52px;height:1px;background:#ffffff"></div><div style="left:465px;top:16px;width:1px;height:16px;background:#ffffff"></div><div style="left:466px;top:31px;width:52px;height:1px;background:#000000"></div><div style="left:517px;top:16px;width:1px;height:16px;background:#000000"></div><div style="left:518px;top:0px;width:53px;height:16px;background:#cccccc"></div><div style="left:518px;top:0px;width:52px;height:1px;background:#ffffff"></div><div style="left:518px;top:0px;width:1px;height:16px;background:#ffffff"></div><div style="left:519px;top:15px;width:52px;height:1px;background:#000000"></div><div style="left:570px;top:0px;width:1px;height:16px;background:#000000"></div><div style="left:518px;top:16px;width:53px;height:16px;background:#cccccc"></div><div style="left:518px;top:16px;width:52px;height:1px;background:#ffffff"></div><div style="left:518px;top:16px;width:1px;height:16px;background:#ffffff"></div><div style="left:519px;top:31px;width:52px;height:1px;background:#000000"></div><div style="left:570px;top:16px;width:1px;height:16px;background:#000000"></div><div style="left:571px;top:0px;width:53px;height:16px;background:#cccccc"></div><div style="left:571px;top:0px;width:52px;height:1px;background:#ffffff"></div><div style="left:571px;top:0px;width:1px;height:16px;background:#ffffff"></div><div style="left:572px;top:15px;width:52px;height:1px;background:#000000"></div><div style="left:623px;top:0px;width:1px;height:16px;background:#000000"></div><div style="left:571px;top:16px;width:53px;height:16px;background:#cccccc"></div><div style="left:571px;top:16px;width:52px;height:1px;background:#ffffff"></div><div style="left:571px;top:16px;width:1px;height:16px;background:#ffffff"></div><div style="left:572px;top:31px;width:52px;height:1px;background:#000000"></div><div style="left:623px;top:16px;width:1px;height:16px;background:#000000"></div><div style="left:624px;top:0px;width:53px;height:16px;background:#cccccc"></div><div style="left:624px;top:0px;width:52px;height:1px;background:#ffffff"></div><div style="left:624px;top:0px;width:1px;height:16px;background:#ffffff"></div><div style="left:625px;top:15px;width:52px;height:1px;background:#000000"></div><div style="left:676px;top:0px;width:1px;height:16px;background:#000000"></div><div style="left:624px;top:16px;width:53px;height:16px;background:#cccccc"></div><div style="left:624px;top:16px;width:52px;height:1px;background:#ffffff"></div><div style="left:624px;top:16px;width:1px;height:16px;background:#ffffff"></div><div style="left:625px;top:31px;width:52px;height:1px;background:#000000"></div><div style="left:676px;top:16px;width:1px;height:16px;background:#000000"></div><div style="left:677px;top:0px;width:53px;height:16px;background:#cccccc"></div><div style="left:677px;top:0px;width:52px;height:1px;background:#ffffff"></div><div style="left:677px;top:0px;width:1px;height:16px;background:#ffffff"></div><div style="left:678px;top:15px;width:52px;height:1px;background:#000000"></div><div style="left:729px;top:0px;width:1px;height:16px;background:#000000"></div><div style="left:677px;top:16px;width:53px;height:16px;background:#cccccc"></div><div style="left:677px;top:16px;width:52px;height:1px;background:#ffffff"></div><div style="left:677px;top:16px;width:1px;height:16px;background:#ffffff"></div><div style="left:678px;top:31px;width:52px;height:1px;background:#000000"></div><div style="left:729px;top:16px;width:1px;height:16px;background:#000000"></div><div style="left:730px;top:0px;width:55px;height:16px;background:#cccccc"></div><div style="left:730px;top:0px;width:54px;height:1px;background:#ffffff"></div><div style="left:730px;top:0px;width:1px;height:16px;background:#ffffff"></div><div style="left:731px;top:15px;width:54px;height:1px;background:#000000"></div><div style="left:784px;top:0px;width:1px;height:16px;background:#000000"></div><div style="left:730px;top:16px;width:55px;height:16px;background:#cccccc"></div><div style="left:730px;top:16px;width:54px;height:1px;background:#ffffff"></div><div style="left:730px;top:16px;width:1px;height:16px;background:#ffffff"></div><div style="left:731px;top:31px;width:54px;height:1px;background:#000000"></div><div style="left:784px;top:16px;width:1px;height:16px;background:#000000"></div><div style="left:785px;top:0px;width:50px;height:16px;background:#cccccc"></div><div style="left:785px;top:0px;width:49px;height:1px;background:#ffffff"></div><div style="left:785px;top:0px;width:1px;height:16px;background:#ffffff"></div><div style="left:786px;top:15px;width:49px;height:1px;background:#000000"></div><div style="left:834px;top:0px;width:1px;height:16px;background:#000000"></div><div style="left:785px;top:16px;width:50px;height:16px;background:#cccccc"></div><div style="left:785px;top:16px;width:49px;height:1px;background:#ffffff"></div><div style="left:785px;top:16px;width:1px;height:16px;background:#ffffff"></div><div style="left:786px;top:31px;width:49px;height:1px;background:#000000"></div><div style="left:834px;top:16px;width:1px;height:16px;background:#000000"></div><div style="left:0px;top:32px;width:13px;height:16px;background:#cccccc"></div><div style="left:0px;top:32px;width:12px;height:1px;background:#ffffff"></div><div style="left:0px;top:32px;width:1px;height:16px;background:#ffffff"></div><div style="left:1px;top:47px;width:12px;height:1px;background:#000000"></div><div style="left:12px;top:32px;width:1px;height:16px;background:#000000"></div><div style="left:13px;top:32px;width:787px;height:16px;background:#003366"></div><div style="left:79px;top:32px;width:1px;height:16px;background:#cccccc"></div><div style="left:146px;top:32px;width:1px;height:16px;background:#cccccc"></div><div style="left:203px;top:32px;width:1px;height:16px;background:#cccccc"></div><div style="left:264px;top:32px;width:1px;height:16px;background:#cccccc"></div><div style="left:354px;top:32px;width:1px;height:16px;background:#cccccc"></div><div style="left:407px;top:32px;width:1px;height:16px;background:#cccccc"></div><div style="left:464px;top:32px;width:1px;height:16px;background:#cccccc"></div><div style="left:517px;top:32px;width:1px;height:16px;background:#cccccc"></div><div style="left:570px;top:32px;width:1px;height:16px;background:#cccccc"></div><div style="left:623px;top:32px;width:1px;height:16px;background:#cccccc"></div><div style="left:676px;top:32px;width:1px;height:16px;background:#cccccc"></div><div style="left:729px;top:32px;width:1px;height:16px;background:#cccccc"></div><div style="left:784px;top:32px;width:1px;height:16px;background:#cccccc"></div><div style="left:834px;top:32px;width:1px;height:16px;background:#cccccc"></div><div style="left:13px;top:47px;width:787px;height:1px;background:#cccccc"></div><div style="left:0px;top:48px;width:13px;height:16px;background:#cccccc"></div><div style="left:0px;top:48px;width:12px;height:1px;background:#ffffff"></div><div style="left:0px;top:48px;width:1px;height:16px;background:#ffffff"></div><div style="left:1px;top:63px;width:12px;height:1px;background:#000000"></div><div style="left:12px;top:48px;width:1px;height:16px;background:#000000"></div><div style="left:13px;top:48px;width:787px;height:16px;background:#ffffff"></div><div style="left:79px;top:48px;width:1px;height:16px;background:#cccccc"></div><div style="left:146px;top:48px;width:1px;height:16px;background:#cccccc"></div><div style="left:203px;top:48px;width:1px;height:16px;background:#cccccc"></div><div style="left:264px;top:48px;width:1px;height:16px;background:#cccccc"></div><div style="left:354px;top:48px;width:1px;height:16px;background:#cccccc"></div><div style="left:407px;top:48px;width:1px;height:16px;background:#cccccc"></div><div style="left:464px;top:48px;width:1px;height:16px;background:#cccccc"></div><div style="left:517px;top:48px;width:1px;height:16px;background:#cccccc"></div><div style="left:570px;top:48px;width:1px;height:16px;background:#cccccc"></div><div style="left:623px;top:48px;width:1px;height:16px;background:#cccccc"></div><div style="left:676px;top:48px;width:1px;height:16px;background:#cccccc"></div><div style="left:729px;top:48px;width:1px;height:16px;background:#cccccc"></div><div style="left:784px;top:48px;width:1px;height:16px;background:#cccccc"></div><div style="left:834px;top:48px;width:1px;height:16px;background:#cccccc"></div><div style="left:13px;top:63px;width:787px;height:1px;background:#cccccc"></div><div style="left:0px;top:64px;width:13px;height:16px;background:#cccccc"></div><div style="left:0px;top:64px;width:12px;height:1px;background:#ffffff"></div><div style="left:0px;top:64px;width:1px;height:16px;background:#ffffff"></div><div style="left:1px;top:79px;width:12px;height:1px;background:#000000"></div><div style="left:12px;top:64px;width:1px;height:16px;background:#000000"></div><div style="left:13px;top:64px;width:787px;height:16px;background:#ffffff"></div><div style="left:79px;top:64px;width:1px;height:16px;background:#cccccc"></div><div style="left:146px;top:64px;width:1px;height:16px;background:#cccccc"></div><div style="left:203px;top:64px;width:1px;height:16px;background:#cccccc"></div><div style="left:264px;top:64px;width:1px;height:16px;background:#cccccc"></div><div style="left:354px;top:64px;width:1px;height:16px;background:#cccccc"></div><div style="left:407px;top:64px;width:1px;height:16px;background:#cccccc"></div><div style="left:464px;top:64px;width:1px;height:16px;background:#cccccc"></div><div style="left:517px;top:64px;width:1px;height:16px;background:#cccccc"></div><div style="left:570px;top:64px;width:1px;height:16px;background:#cccccc"></div><div style="left:623px;top:64px;width:1px;height:16px;background:#cccccc"></div><div style="left:676px;top:64px;width:1px;height:16px;background:#cccccc"></div><div style="left:729px;top:64px;width:1px;height:16px;background:#cccccc"></div><div style="left:784px;top:64px;width:1px;height:16px;background:#cccccc"></div><div style="left:834px;top:64px;width:1px;height:16px;background:#cccccc"></div><div style="left:13px;top:79px;width:787px;height:1px;background:#cccccc"></div><div style="left:0px;top:80px;width:13px;height:16px;background:#cccccc"></div><div style="left:0px;top:80px;width:12px;height:1px;background:#ffffff"></div><div style="left:0px;top:80px;width:1px;height:16px;background:#ffffff"></div><div style="left:1px;top:95px;width:12px;height:1px;background:#000000"></div><div style="left:12px;top:80px;width:1px;height:16px;background:#000000"></div><div style="left:13px;top:80px;width:787px;height:16px;background:#ffffff"></div><div style="left:79px;top:80px;width:1px;height:16px;background:#cccccc"></div><div style="left:146px;top:80px;width:1px;height:16px;background:#cccccc"></div><div style="left:203px;top:80px;width:1px;height:16px;background:#cccccc"></div><div style="left:264px;top:80px;width:1px;height:16px;background:#cccccc"></div><div style="left:354px;top:80px;width:1px;height:16px;background:#cccccc"></div><div style="left:407px;top:80px;width:1px;height:16px;background:#cccccc"></div><div style="left:464px;top:80px;width:1px;height:16px;background:#cccccc"></div><div style="left:517px;top:80px;width:1px;height:16px;background:#cccccc"></div><div style="left:570px;top:80px;width:1px;height:16px;background:#cccccc"></div><div style="left:623px;top:80px;width:1px;height:16px;background:#cccccc"></div><div style="left:676px;top:80px;width:1px;height:16px;background:#cccccc"></div><div style="left:729px;top:80px;width:1px;height:16px;background:#cccccc"></div><div style="left:784px;top:80px;width:1px;height:16px;background:#cccccc"></div><div style="left:834px;top:80px;width:1px;height:16px;background:#cccccc"></div><div style="left:13px;top:95px;width:787px;height:1px;background:#cccccc"></div><div style="left:0px;top:96px;width:13px;height:16px;background:#cccccc"></div><div style="left:0px;top:96px;width:12px;height:1px;background:#ffffff"></div><div style="left:0px;top:96px;width:1px;height:16px;background:#ffffff"></div><div style="left:1px;top:111px;width:12px;height:1px;background:#000000"></div><div style="left:12px;top:96px;width:1px;height:16px;background:#000000"></div><div style="left:13px;top:96px;width:787px;height:16px;background:#ffffff"></div><div style="left:79px;top:96px;width:1px;height:16px;background:#cccccc"></div><div style="left:146px;top:96px;width:1px;height:16px;background:#cccccc"></div><div style="left:203px;top:96px;width:1px;height:16px;background:#cccccc"></div><div style="left:264px;top:96px;width:1px;height:16px;background:#cccccc"></div><div style="left:354px;top:96px;width:1px;height:16px;background:#cccccc"></div><div style="left:407px;top:96px;width:1px;height:16px;background:#cccccc"></div><div style="left:464px;top:96px;width:1px;height:16px;background:#cccccc"></div><div style="left:517px;top:96px;width:1px;height:16px;background:#cccccc"></div><div style="left:570px;top:96px;width:1px;height:16px;background:#cccccc"></div><div style="left:623px;top:96px;width:1px;height:16px;background:#cccccc"></div><div style="left:676px;top:96px;width:1px;height:16px;background:#cccccc"></div><div style="left:729px;top:96px;width:1px;height:16px;background:#cccccc"></div><div style="left:784px;top:96px;width:1px;height:16px;background:#cccccc"></div><div style="left:834px;top:96px;width:1px;height:16px;background:#cccccc"></div><div style="left:13px;top:111px;width:787px;height:1px;background:#cccccc"></div><div style="left:0px;top:112px;width:13px;height:16px;background:#cccccc"></div><div style="left:0px;top:112px;width:12px;height:1px;background:#ffffff"></div><div style="left:0px;top:112px;width:1px;height:16px;background:#ffffff"></div><div style="left:1px;top:127px;width:12px;height:1px;background:#000000"></div><div style="left:12px;top:112px;width:1px;height:16px;background:#000000"></div><div style="left:13px;top:112px;width:787px;height:16px;background:#ffffff"></div><div style="left:79px;top:112px;width:1px;height:16px;background:#cccccc"></div><div style="left:146px;top:112px;width:1px;height:16px;background:#cccccc"></div><div style="left:203px;top:112px;width:1px;height:16px;background:#cccccc"></div><div style="left:264px;top:112px;width:1px;height:16px;background:#cccccc"></div><div style="left:354px;top:112px;width:1px;height:16px;background:#cccccc"></div><div style="left:407px;top:112px;width:1px;height:16px;background:#cccccc"></div><div style="left:464px;top:112px;width:1px;height:16px;background:#cccccc"></div><div style="left:517px;top:112px;width:1px;height:16px;background:#cccccc"></div><div style="left:570px;top:112px;width:1px;height:16px;background:#cccccc"></div><div style="left:623px;top:112px;width:1px;height:16px;background:#cccccc"></div><div style="left:676px;top:112px;width:1px;height:16px;background:#cccccc"></div><div style="left:729px;top:112px;width:1px;height:16px;background:#cccccc"></div><div style="left:784px;top:112px;width:1px;height:16px;background:#cccccc"></div><div style="left:834px;top:112px;width:1px;height:16px;background:#cccccc"></div><div style="left:13px;top:127px;width:787px;height:1px;background:#cccccc"></div><div style="left:0px;top:128px;width:13px;height:16px;background:#cccccc"></div><div style="left:0px;top:128px;width:12px;height:1px;background:#ffffff"></div><div style="left:0px;top:128px;width:1px;height:16px;background:#ffffff"></div><div style="left:1px;top:143px;width:12px;height:1px;background:#000000"></div><div style="left:12px;top:128px;width:1px;height:16px;background:#000000"></div><div style="left:13px;top:128px;width:787px;height:16px;background:#ffffff"></div><div style="left:79px;top:128px;width:1px;height:16px;background:#cccccc"></div><div style="left:146px;top:128px;width:1px;height:16px;background:#cccccc"></div><div style="left:203px;top:128px;width:1px;height:16px;background:#cccccc"></div><div style="left:264px;top:128px;width:1px;height:16px;background:#cccccc"></div><div style="left:354px;top:128px;width:1px;height:16px;background:#cccccc"></div><div style="left:407px;top:128px;width:1px;height:16px;background:#cccccc"></div><div style="left:464px;top:128px;width:1px;height:16px;background:#cccccc"></div><div style="left:517px;top:128px;width:1px;height:16px;background:#cccccc"></div><div style="left:570px;top:128px;width:1px;height:16px;background:#cccccc"></div><div style="left:623px;top:128px;width:1px;height:16px;background:#cccccc"></div><div style="left:676px;top:128px;width:1px;height:16px;background:#cccccc"></div><div style="left:729px;top:128px;width:1px;height:16px;background:#cccccc"></div><div style="left:784px;top:128px;width:1px;height:16px;background:#cccccc"></div><div style="left:834px;top:128px;width:1px;height:16px;background:#cccccc"></div><div style="left:13px;top:143px;width:787px;height:1px;background:#cccccc"></div></div><div style="left:15px;top:600px;width:800px;height:16px;background:#cccccc;"></div><div style="left:47px;top:600px;width:752px;height:16px;background:repeating-conic-gradient(#cccccc 0 25%, #ffffff 0 50%) 0 0/2px 2px"></div><div style="left:15px;top:600px;width:16px;height:16px;background:#cccccc;"></div><div style="left:15px;top:600px;width:15px;height:1px;background:#cccccc;"></div><div style="left:15px;top:600px;width:1px;height:15px;background:#cccccc;"></div><div style="left:16px;top:601px;width:13px;height:1px;background:#ffffff;"></div><div style="left:16px;top:601px;width:1px;height:13px;background:#ffffff;"></div><div style="left:15px;top:615px;width:16px;height:1px;background:#404040;"></div><div style="left:30px;top:600px;width:1px;height:16px;background:#404040;"></div><div style="left:16px;top:614px;width:14px;height:1px;background:#808080;"></div><div style="left:29px;top:601px;width:1px;height:14px;background:#808080;"></div><div style="left:31px;top:600px;width:16px;height:16px;background:#cccccc;"></div><div style="left:31px;top:600px;width:15px;height:1px;background:#cccccc;"></div><div style="left:31px;top:600px;width:1px;height:15px;background:#cccccc;"></div><div style="left:32px;top:601px;width:13px;height:1px;background:#ffffff;"></div><div style="left:32px;top:601px;width:1px;height:13px;background:#ffffff;"></div><div style="left:31px;top:615px;width:16px;height:1px;background:#404040;"></div><div style="left:46px;top:600px;width:1px;height:16px;background:#404040;"></div><div style="left:32px;top:614px;width:14px;height:1px;background:#808080;"></div><div style="left:45px;top:601px;width:1px;height:14px;background:#808080;"></div><div style="left:799px;top:600px;width:16px;height:16px;background:#cccccc;"></div><div style="left:799px;top:600px;width:15px;height:1px;background:#cccccc;"></div><div style="left:799px;top:600px;width:1px;height:15px;background:#cccccc;"></div><div style="left:800px;top:601px;width:13px;height:1px;background:#ffffff;"></div><div style="left:800px;top:601px;width:1px;height:13px;background:#ffffff;"></div><div style="left:799px;top:615px;width:16px;height:1px;background:#404040;"></div><div style="left:814px;top:600px;width:1px;height:16px;background:#404040;"></div><div style="left:800px;top:614px;width:14px;height:1px;background:#808080;"></div><div style="left:813px;top:601px;width:1px;height:14px;background:#808080;"></div><div style="left:20px;top:607px;width:1px;height:1px;background:#000000;"></div><div style="left:21px;top:606px;width:1px;height:3px;background:#000000;"></div><div style="left:22px;top:605px;width:1px;height:5px;background:#000000;"></div><div style="left:23px;top:604px;width:1px;height:7px;background:#000000;"></div><div style="left:805px;top:604px;width:1px;height:7px;background:#000000;"></div><div style="left:806px;top:605px;width:1px;height:5px;background:#000000;"></div><div style="left:807px;top:606px;width:1px;height:3px;background:#000000;"></div><div style="left:808px;top:607px;width:1px;height:1px;background:#000000;"></div>
<div id="tx"><div class="t" style="left:24.00px;top:7px;font-family:'Liberation Sans', sans-serif;font-size:11px;font-weight:bold;line-height:13px;color:#fff;transform:scaleX(1.0571)">AS1379 Production Assessment - Second Beta</div><div class="t" style="left:9.00px;top:26px;font-family:'Liberation Sans', sans-serif;font-size:11px;font-weight:normal;line-height:13px;color:#000;transform:scaleX(1.0172)">Report Type</div><div class="t" style="left:15.00px;top:46px;font-family:'Liberation Sans', sans-serif;font-size:12px;font-weight:normal;line-height:14px;color:#000;transform:scaleX(0.8989)">Region Selection</div><div class="t" style="left:22.00px;top:72px;font-family:'Liberation Sans', sans-serif;font-size:12px;font-weight:normal;line-height:14px;color:#000;transform:scaleX(0.9231)">Region:</div><div class="t" style="left:70.00px;top:72px;font-family:'Liberation Sans', sans-serif;font-size:12px;font-weight:normal;line-height:14px;color:#000;transform:scaleX(0.9028)">[R6] Region 6</div><div class="t" style="left:325.00px;top:46px;font-family:'Liberation Sans', sans-serif;font-size:12px;font-weight:normal;line-height:14px;color:#000;transform:scaleX(0.8627)">Existing Assessment Periods</div><div class="t" style="left:336.00px;top:72px;font-family:'Liberation Sans', sans-serif;font-size:12px;font-weight:normal;line-height:14px;color:#000;transform:scaleX(0.8889)">Period:</div><div class="t" style="left:380.00px;top:72px;font-family:'Liberation Sans', sans-serif;font-size:12px;font-weight:normal;line-height:14px;color:#000;transform:scaleX(0.9111)">Q2 2003</div><div class="t" style="left:637.00px;top:46px;font-family:'Liberation Sans', sans-serif;font-size:12px;font-weight:bold;line-height:14px;color:#000;transform:scaleX(0.9728)">AS1379 Production Assessment</div><div class="t" style="left:15.00px;top:109px;font-family:'Liberation Sans', sans-serif;font-size:12px;font-weight:normal;line-height:14px;color:#000;transform:scaleX(0.8676)">Grade Setup</div><div class="t" style="left:86.00px;top:107px;font-family:'Liberation Sans', sans-serif;font-size:12px;font-weight:normal;line-height:14px;color:#000;transform:scaleX(0.8723)">Assessment Data</div><div class="t" style="left:180.00px;top:109px;font-family:'Liberation Sans', sans-serif;font-size:12px;font-weight:normal;line-height:14px;color:#000;transform:scaleX(0.8889)">Report Settings</div><div class="t" style="left:265.00px;top:109px;font-family:'Liberation Sans', sans-serif;font-size:12px;font-weight:normal;line-height:14px;color:#000;transform:scaleX(0.8718)">Report Display</div><div class="t" style="left:23.00px;top:132px;font-family:'Liberation Sans', sans-serif;font-size:12px;font-weight:normal;line-height:14px;color:#000;transform:scaleX(0.8990)">Production Interval</div><div class="t" style="left:22.00px;top:156px;font-family:'Liberation Sans', sans-serif;font-size:12px;font-weight:normal;line-height:14px;color:#000;transform:scaleX(0.8621)">From:</div><div class="t" style="left:54.00px;top:156px;font-family:'Liberation Sans', sans-serif;font-size:12px;font-weight:normal;line-height:14px;color:#000;transform:scaleX(0.9062)">12 AM</div><div class="t" style="left:24.00px;top:184px;font-family:'Liberation Sans', sans-serif;font-size:12px;font-weight:normal;line-height:14px;color:#000;transform:scaleX(0.9200)">Until:</div><div class="t" style="left:54.00px;top:184px;font-family:'Liberation Sans', sans-serif;font-size:12px;font-weight:normal;line-height:14px;color:#000;transform:scaleX(0.9062)">12 AM</div><div class="t" style="left:97.00px;top:154px;font-family:'Liberation Sans', sans-serif;font-size:12px;font-weight:normal;line-height:14px;color:#000;transform:scaleX(0.9818)">1 /04/2003</div><div class="t" style="left:97.00px;top:182px;font-family:'Liberation Sans', sans-serif;font-size:12px;font-weight:normal;line-height:14px;color:#000;transform:scaleX(0.9818)">1 /07/2003</div><div class="t" style="left:202.00px;top:161px;font-family:'Liberation Sans', sans-serif;font-size:12px;font-weight:normal;line-height:14px;color:#000;transform:scaleX(0.9028)">Load Data for</div><div class="t" style="left:217.00px;top:174px;font-family:'Liberation Sans', sans-serif;font-size:12px;font-weight:normal;line-height:14px;color:#000;transform:scaleX(0.9211)">Interval</div><div class="t" style="left:307.00px;top:132px;font-family:'Liberation Sans', sans-serif;font-size:12px;font-weight:normal;line-height:14px;color:#000;transform:scaleX(0.8641)">Assessment Period</div><div class="t" style="left:325.50px;top:155px;font-family:'Liberation Sans', sans-serif;font-size:12px;font-weight:normal;line-height:14px;color:#000;transform:scaleX(0.9615)">Save</div><div class="t" style="left:390.50px;top:155px;font-family:'Liberation Sans', sans-serif;font-size:12px;font-weight:normal;line-height:14px;color:#000;transform:scaleX(0.9394)">Delete</div><div class="t" style="left:343.50px;top:181px;font-family:'Liberation Sans', sans-serif;font-size:12px;font-weight:normal;line-height:14px;color:#000;transform:scaleX(0.9194)">New / Clear</div><div class="t" style="left:466.00px;top:132px;font-family:'Liberation Sans', sans-serif;font-size:12px;font-weight:normal;line-height:14px;color:#000;transform:scaleX(0.8544)">Columns Displayed</div><div class="t" style="left:489.00px;top:155px;font-family:'Liberation Sans', sans-serif;font-size:12px;font-weight:normal;line-height:14px;color:#000;transform:scaleX(0.8710)">Grade Data</div><div class="t" style="left:574.00px;top:155px;font-family:'Liberation Sans', sans-serif;font-size:12px;font-weight:normal;line-height:14px;color:#000;transform:scaleX(0.8851)">Six Months Data</div><div class="t" style="left:683.00px;top:155px;font-family:'Liberation Sans', sans-serif;font-size:12px;font-weight:normal;line-height:14px;color:#000;transform:scaleX(0.9149)">KPI Data</div><div class="t" style="left:488.00px;top:179px;font-family:'Liberation Sans', sans-serif;font-size:12px;font-weight:normal;line-height:14px;color:#000;transform:scaleX(0.9318)">P.I. Data</div><div class="t" style="left:574.00px;top:179px;font-family:'Liberation Sans', sans-serif;font-size:12px;font-weight:normal;line-height:14px;color:#000;transform:scaleX(0.8831)">Reported Data</div>
<div style="left:15px;top:217px;width:800px;height:383px;overflow:hidden"><div class="t" style="left:3.00px;top:17px;font-family:'Liberation Sans', sans-serif;font-size:12px;font-weight:normal;line-height:14px;color:#000;transform:scaleX(0.8500)">E</div><div class="t" style="left:16.00px;top:17px;font-family:'Liberation Sans', sans-serif;font-size:12px;font-weight:normal;line-height:14px;color:#000;transform:scaleX(0.8500)">Plant Group</div><div class="t" style="left:84.00px;top:17px;font-family:'Liberation Sans', sans-serif;font-size:12px;font-weight:normal;line-height:14px;color:#000;transform:scaleX(0.8500)">Grade</div><div class="t" style="left:150.00px;top:1px;font-family:'Liberation Sans', sans-serif;font-size:12px;font-weight:normal;line-height:14px;color:#000;transform:scaleX(0.8500)">P.I.</div><div class="t" style="left:150.00px;top:17px;font-family:'Liberation Sans', sans-serif;font-size:12px;font-weight:normal;line-height:14px;color:#000;transform:scaleX(0.8500)">Production</div><div class="t" style="left:207.00px;top:1px;font-family:'Liberation Sans', sans-serif;font-size:12px;font-weight:normal;line-height:14px;color:#000;transform:scaleX(0.8500)">P.I.</div><div class="t" style="left:207.00px;top:17px;font-family:'Liberation Sans', sans-serif;font-size:12px;font-weight:normal;line-height:14px;color:#000;transform:scaleX(0.8500)">Samples (n)</div><div class="t" style="left:268.00px;top:1px;font-family:'Liberation Sans', sans-serif;font-size:12px;font-weight:normal;line-height:14px;color:#000;transform:scaleX(0.8500)">P.I.</div><div class="t" style="left:268.00px;top:17px;font-family:'Liberation Sans', sans-serif;font-size:12px;font-weight:normal;line-height:14px;color:#000;transform:scaleX(0.8500)">Freq. (per 100m3)</div><div class="t" style="left:358.00px;top:1px;font-family:'Liberation Sans', sans-serif;font-size:12px;font-weight:normal;line-height:14px;color:#000;transform:scaleX(0.8500)">P.I.</div><div class="t" style="left:359.00px;top:17px;font-family:'Liberation Sans', sans-serif;font-size:12px;font-weight:normal;line-height:14px;color:#000;transform:scaleX(0.8500)">7d Mean</div><div class="t" style="left:411.00px;top:1px;font-family:'Liberation Sans', sans-serif;font-size:12px;font-weight:normal;line-height:14px;color:#000;transform:scaleX(0.8500)">P.I.</div><div class="t" style="left:412.00px;top:17px;font-family:'Liberation Sans', sans-serif;font-size:12px;font-weight:normal;line-height:14px;color:#000;transform:scaleX(0.8500)">28d Mean</div><div class="t" style="left:468.00px;top:1px;font-family:'Liberation Sans', sans-serif;font-size:12px;font-weight:normal;line-height:14px;color:#000;transform:scaleX(0.8500)">P.I.</div><div class="t" style="left:468.00px;top:17px;font-family:'Liberation Sans', sans-serif;font-size:12px;font-weight:normal;line-height:14px;color:#000;transform:scaleX(0.8500)">S.D.</div><div class="t" style="left:522.00px;top:1px;font-family:'Liberation Sans', sans-serif;font-size:12px;font-weight:normal;line-height:14px;color:#000;transform:scaleX(0.8500)">6 Month</div><div class="t" style="left:521.00px;top:17px;font-family:'Liberation Sans', sans-serif;font-size:12px;font-weight:normal;line-height:14px;color:#000;transform:scaleX(0.8500)">Samples</div><div class="t" style="left:575.00px;top:1px;font-family:'Liberation Sans', sans-serif;font-size:12px;font-weight:normal;line-height:14px;color:#000;transform:scaleX(0.8500)">6 Month</div><div class="t" style="left:574.00px;top:17px;font-family:'Liberation Sans', sans-serif;font-size:12px;font-weight:normal;line-height:14px;color:#000;transform:scaleX(0.8500)">S.D.</div><div class="t" style="left:627.00px;top:1px;font-family:'Liberation Sans', sans-serif;font-size:12px;font-weight:normal;line-height:14px;color:#000;transform:scaleX(0.8500)">Reported</div><div class="t" style="left:627.00px;top:17px;font-family:'Liberation Sans', sans-serif;font-size:12px;font-weight:normal;line-height:14px;color:#000;transform:scaleX(0.8500)">Samples</div><div class="t" style="left:680.00px;top:1px;font-family:'Liberation Sans', sans-serif;font-size:12px;font-weight:normal;line-height:14px;color:#000;transform:scaleX(0.8500)">Reported</div><div class="t" style="left:680.00px;top:17px;font-family:'Liberation Sans', sans-serif;font-size:12px;font-weight:normal;line-height:14px;color:#000;transform:scaleX(0.8500)">S.D. (s)</div><div class="t" style="left:733.00px;top:1px;font-family:'Liberation Sans', sans-serif;font-size:12px;font-weight:normal;line-height:14px;color:#000;transform:scaleX(0.8500)">Reported</div><div class="t" style="left:733.00px;top:17px;font-family:'Liberation Sans', sans-serif;font-size:12px;font-weight:normal;line-height:14px;color:#000;transform:scaleX(0.8500)">Req. F'cm</div><div class="t" style="left:788.00px;top:1px;font-family:'Liberation Sans', sans-serif;font-size:12px;font-weight:normal;line-height:14px;color:#000;transform:scaleX(0.8500)">Re</div><div class="t" style="left:788.00px;top:17px;font-family:'Liberation Sans', sans-serif;font-size:12px;font-weight:normal;line-height:14px;color:#000;transform:scaleX(0.8500)">No</div><div class="t" style="left:17.00px;top:33px;font-family:'Liberation Sans', sans-serif;font-size:12px;font-weight:normal;line-height:14px;color:#fff;transform:scaleX(0.8500)">Group 1</div><div class="t" style="left:84.00px;top:33px;font-family:'Liberation Sans', sans-serif;font-size:12px;font-weight:normal;line-height:14px;color:#fff;transform:scaleX(0.8500)">Grade 1</div><div class="t" style="left:151.00px;top:33px;font-family:'Liberation Sans', sans-serif;font-size:12px;font-weight:normal;line-height:14px;color:#fff;transform:scaleX(0.8900)">501.3</div><div class="t" style="left:207.00px;top:33px;font-family:'Liberation Sans', sans-serif;font-size:12px;font-weight:normal;line-height:14px;color:#fff;transform:scaleX(0.8900)">10</div><div class="t" style="left:269.00px;top:33px;font-family:'Liberation Sans', sans-serif;font-size:12px;font-weight:normal;line-height:14px;color:#fff;transform:scaleX(0.8900)">2</div><div class="t" style="left:358.00px;top:33px;font-family:'Liberation Sans', sans-serif;font-size:12px;font-weight:normal;line-height:14px;color:#fff;transform:scaleX(0.8900)">18.1</div><div class="t" style="left:412.00px;top:33px;font-family:'Liberation Sans', sans-serif;font-size:12px;font-weight:normal;line-height:14px;color:#fff;transform:scaleX(0.8900)">23.5</div><div class="t" style="left:469.00px;top:33px;font-family:'Liberation Sans', sans-serif;font-size:12px;font-weight:normal;line-height:14px;color:#fff;transform:scaleX(0.8900)">3.4</div><div class="t" style="left:522.00px;top:33px;font-family:'Liberation Sans', sans-serif;font-size:12px;font-weight:normal;line-height:14px;color:#fff;transform:scaleX(0.8900)">28</div><div class="t" style="left:575.00px;top:33px;font-family:'Liberation Sans', sans-serif;font-size:12px;font-weight:normal;line-height:14px;color:#fff;transform:scaleX(0.8900)">3.2</div><div class="t" style="left:17.00px;top:49px;font-family:'Liberation Sans', sans-serif;font-size:12px;font-weight:normal;line-height:14px;color:#000;transform:scaleX(0.8500)">Group 1</div><div class="t" style="left:84.00px;top:49px;font-family:'Liberation Sans', sans-serif;font-size:12px;font-weight:normal;line-height:14px;color:#000;transform:scaleX(0.8500)">Grade 2</div><div class="t" style="left:151.00px;top:49px;font-family:'Liberation Sans', sans-serif;font-size:12px;font-weight:normal;line-height:14px;color:#000;transform:scaleX(0.8900)">2367.1</div><div class="t" style="left:208.00px;top:49px;font-family:'Liberation Sans', sans-serif;font-size:12px;font-weight:normal;line-height:14px;color:#000;transform:scaleX(0.8900)">39</div><div class="t" style="left:268.00px;top:49px;font-family:'Liberation Sans', sans-serif;font-size:12px;font-weight:normal;line-height:14px;color:#000;transform:scaleX(0.8900)">1.6</div><div class="t" style="left:359.00px;top:49px;font-family:'Liberation Sans', sans-serif;font-size:12px;font-weight:normal;line-height:14px;color:#000;transform:scaleX(0.8900)">34.8</div><div class="t" style="left:412.00px;top:49px;font-family:'Liberation Sans', sans-serif;font-size:12px;font-weight:normal;line-height:14px;color:#000;transform:scaleX(0.8900)">39.3</div><div class="t" style="left:469.00px;top:49px;font-family:'Liberation Sans', sans-serif;font-size:12px;font-weight:normal;line-height:14px;color:#000;transform:scaleX(0.8900)">2.5</div><div class="t" style="left:521.00px;top:49px;font-family:'Liberation Sans', sans-serif;font-size:12px;font-weight:normal;line-height:14px;color:#000;transform:scaleX(0.8900)">159</div><div class="t" style="left:575.00px;top:49px;font-family:'Liberation Sans', sans-serif;font-size:12px;font-weight:normal;line-height:14px;color:#000;transform:scaleX(0.8900)">2.6</div><div class="t" style="left:17.00px;top:65px;font-family:'Liberation Sans', sans-serif;font-size:12px;font-weight:normal;line-height:14px;color:#000;transform:scaleX(0.8500)">Group 1</div><div class="t" style="left:84.00px;top:65px;font-family:'Liberation Sans', sans-serif;font-size:12px;font-weight:normal;line-height:14px;color:#000;transform:scaleX(0.8500)">Grade 3</div><div class="t" style="left:150.00px;top:65px;font-family:'Liberation Sans', sans-serif;font-size:12px;font-weight:normal;line-height:14px;color:#000;transform:scaleX(0.8900)">1270.9</div><div class="t" style="left:208.00px;top:65px;font-family:'Liberation Sans', sans-serif;font-size:12px;font-weight:normal;line-height:14px;color:#000;transform:scaleX(0.8900)">25</div><div class="t" style="left:269.00px;top:65px;font-family:'Liberation Sans', sans-serif;font-size:12px;font-weight:normal;line-height:14px;color:#000;transform:scaleX(0.8900)">2</div><div class="t" style="left:359.00px;top:65px;font-family:'Liberation Sans', sans-serif;font-size:12px;font-weight:normal;line-height:14px;color:#000;transform:scaleX(0.8900)">35.6</div><div class="t" style="left:412.00px;top:65px;font-family:'Liberation Sans', sans-serif;font-size:12px;font-weight:normal;line-height:14px;color:#000;transform:scaleX(0.8900)">43.8</div><div class="t" style="left:469.00px;top:65px;font-family:'Liberation Sans', sans-serif;font-size:12px;font-weight:normal;line-height:14px;color:#000;transform:scaleX(0.8900)">2.9</div><div class="t" style="left:522.00px;top:65px;font-family:'Liberation Sans', sans-serif;font-size:12px;font-weight:normal;line-height:14px;color:#000;transform:scaleX(0.8900)">73</div><div class="t" style="left:575.00px;top:65px;font-family:'Liberation Sans', sans-serif;font-size:12px;font-weight:normal;line-height:14px;color:#000;transform:scaleX(0.8900)">3.2</div><div class="t" style="left:17.00px;top:81px;font-family:'Liberation Sans', sans-serif;font-size:12px;font-weight:normal;line-height:14px;color:#000;transform:scaleX(0.8500)">Group 1</div><div class="t" style="left:84.00px;top:81px;font-family:'Liberation Sans', sans-serif;font-size:12px;font-weight:normal;line-height:14px;color:#000;transform:scaleX(0.8500)">Grade 4</div><div class="t" style="left:151.00px;top:81px;font-family:'Liberation Sans', sans-serif;font-size:12px;font-weight:normal;line-height:14px;color:#000;transform:scaleX(0.8900)">236.6</div><div class="t" style="left:208.00px;top:81px;font-family:'Liberation Sans', sans-serif;font-size:12px;font-weight:normal;line-height:14px;color:#000;transform:scaleX(0.8900)">5</div><div class="t" style="left:269.00px;top:81px;font-family:'Liberation Sans', sans-serif;font-size:12px;font-weight:normal;line-height:14px;color:#000;transform:scaleX(0.8900)">2.1</div><div class="t" style="left:359.00px;top:81px;font-family:'Liberation Sans', sans-serif;font-size:12px;font-weight:normal;line-height:14px;color:#000;transform:scaleX(0.8900)">29.4</div><div class="t" style="left:412.00px;top:81px;font-family:'Liberation Sans', sans-serif;font-size:12px;font-weight:normal;line-height:14px;color:#000;transform:scaleX(0.8900)">34.2</div><div class="t" style="left:469.00px;top:81px;font-family:'Liberation Sans', sans-serif;font-size:12px;font-weight:normal;line-height:14px;color:#000;transform:scaleX(0.8900)">3.2</div><div class="t" style="left:521.00px;top:81px;font-family:'Liberation Sans', sans-serif;font-size:12px;font-weight:normal;line-height:14px;color:#000;transform:scaleX(0.8900)">14</div><div class="t" style="left:575.00px;top:81px;font-family:'Liberation Sans', sans-serif;font-size:12px;font-weight:normal;line-height:14px;color:#000;transform:scaleX(0.8900)">3.5</div><div class="t" style="left:17.00px;top:97px;font-family:'Liberation Sans', sans-serif;font-size:12px;font-weight:normal;line-height:14px;color:#000;transform:scaleX(0.8500)">Group 2</div><div class="t" style="left:84.00px;top:97px;font-family:'Liberation Sans', sans-serif;font-size:12px;font-weight:normal;line-height:14px;color:#000;transform:scaleX(0.8500)">Grade 5</div><div class="t" style="left:150.00px;top:97px;font-family:'Liberation Sans', sans-serif;font-size:12px;font-weight:normal;line-height:14px;color:#000;transform:scaleX(0.8900)">1897.4</div><div class="t" style="left:207.00px;top:97px;font-family:'Liberation Sans', sans-serif;font-size:12px;font-weight:normal;line-height:14px;color:#000;transform:scaleX(0.8900)">19</div><div class="t" style="left:268.00px;top:97px;font-family:'Liberation Sans', sans-serif;font-size:12px;font-weight:normal;line-height:14px;color:#000;transform:scaleX(0.8900)">1</div><div class="t" style="left:358.00px;top:97px;font-family:'Liberation Sans', sans-serif;font-size:12px;font-weight:normal;line-height:14px;color:#000;transform:scaleX(0.8900)">17.9</div><div class="t" style="left:412.00px;top:97px;font-family:'Liberation Sans', sans-serif;font-size:12px;font-weight:normal;line-height:14px;color:#000;transform:scaleX(0.8900)">22.8</div><div class="t" style="left:469.00px;top:97px;font-family:'Liberation Sans', sans-serif;font-size:12px;font-weight:normal;line-height:14px;color:#000;transform:scaleX(0.8900)">2.6</div><div class="t" style="left:522.00px;top:97px;font-family:'Liberation Sans', sans-serif;font-size:12px;font-weight:normal;line-height:14px;color:#000;transform:scaleX(0.8900)">42</div><div class="t" style="left:575.00px;top:97px;font-family:'Liberation Sans', sans-serif;font-size:12px;font-weight:normal;line-height:14px;color:#000;transform:scaleX(0.8900)">2.8</div><div class="t" style="left:17.00px;top:113px;font-family:'Liberation Sans', sans-serif;font-size:12px;font-weight:normal;line-height:14px;color:#000;transform:scaleX(0.8500)">Group 2</div><div class="t" style="left:84.00px;top:113px;font-family:'Liberation Sans', sans-serif;font-size:12px;font-weight:normal;line-height:14px;color:#000;transform:scaleX(0.8500)">Grade 6</div><div class="t" style="left:151.00px;top:113px;font-family:'Liberation Sans', sans-serif;font-size:12px;font-weight:normal;line-height:14px;color:#000;transform:scaleX(0.8900)">987.5</div><div class="t" style="left:207.00px;top:113px;font-family:'Liberation Sans', sans-serif;font-size:12px;font-weight:normal;line-height:14px;color:#000;transform:scaleX(0.8900)">15</div><div class="t" style="left:268.00px;top:113px;font-family:'Liberation Sans', sans-serif;font-size:12px;font-weight:normal;line-height:14px;color:#000;transform:scaleX(0.8900)">1.5</div><div class="t" style="left:359.00px;top:113px;font-family:'Liberation Sans', sans-serif;font-size:12px;font-weight:normal;line-height:14px;color:#000;transform:scaleX(0.8900)">36.3</div><div class="t" style="left:412.00px;top:113px;font-family:'Liberation Sans', sans-serif;font-size:12px;font-weight:normal;line-height:14px;color:#000;transform:scaleX(0.8900)">42.7</div><div class="t" style="left:469.00px;top:113px;font-family:'Liberation Sans', sans-serif;font-size:12px;font-weight:normal;line-height:14px;color:#000;transform:scaleX(0.8900)">3.1</div><div class="t" style="left:521.00px;top:113px;font-family:'Liberation Sans', sans-serif;font-size:12px;font-weight:normal;line-height:14px;color:#000;transform:scaleX(0.8900)">19</div><div class="t" style="left:575.00px;top:113px;font-family:'Liberation Sans', sans-serif;font-size:12px;font-weight:normal;line-height:14px;color:#000;transform:scaleX(0.8900)">3.4</div><div class="t" style="left:17.00px;top:129px;font-family:'Liberation Sans', sans-serif;font-size:12px;font-weight:normal;line-height:14px;color:#000;transform:scaleX(0.8500)">Group 2</div><div class="t" style="left:84.00px;top:129px;font-family:'Liberation Sans', sans-serif;font-size:12px;font-weight:normal;line-height:14px;color:#000;transform:scaleX(0.8500)">Grade 7</div><div class="t" style="left:151.00px;top:129px;font-family:'Liberation Sans', sans-serif;font-size:12px;font-weight:normal;line-height:14px;color:#000;transform:scaleX(0.8900)">321</div><div class="t" style="left:208.00px;top:129px;font-family:'Liberation Sans', sans-serif;font-size:12px;font-weight:normal;line-height:14px;color:#000;transform:scaleX(0.8900)">5</div><div class="t" style="left:268.00px;top:129px;font-family:'Liberation Sans', sans-serif;font-size:12px;font-weight:normal;line-height:14px;color:#000;transform:scaleX(0.8900)">1.6</div><div class="t" style="left:359.00px;top:129px;font-family:'Liberation Sans', sans-serif;font-size:12px;font-weight:normal;line-height:14px;color:#000;transform:scaleX(0.8900)">28.1</div><div class="t" style="left:412.00px;top:129px;font-family:'Liberation Sans', sans-serif;font-size:12px;font-weight:normal;line-height:14px;color:#000;transform:scaleX(0.8900)">32.9</div><div class="t" style="left:469.00px;top:129px;font-family:'Liberation Sans', sans-serif;font-size:12px;font-weight:normal;line-height:14px;color:#000;transform:scaleX(0.8900)">2.9</div><div class="t" style="left:521.00px;top:129px;font-family:'Liberation Sans', sans-serif;font-size:12px;font-weight:normal;line-height:14px;color:#000;transform:scaleX(0.8900)">12</div><div class="t" style="left:575.00px;top:129px;font-family:'Liberation Sans', sans-serif;font-size:12px;font-weight:normal;line-height:14px;color:#000;transform:scaleX(0.8900)">3.5</div></div></div>
</body></html>
